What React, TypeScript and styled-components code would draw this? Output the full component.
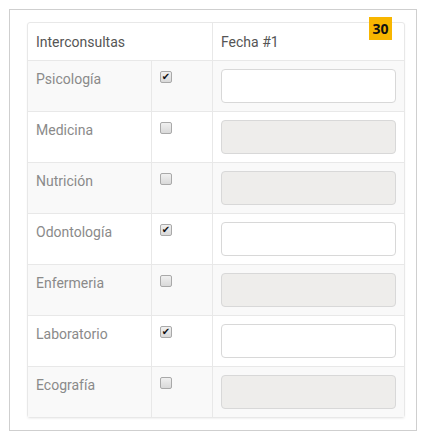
import React from "react";
import styled, { createGlobalStyle } from "styled-components";

const GlobalStyle = createGlobalStyle`
  body {
    margin: 0;
    background: #fff;
    font-family: Roboto, "Liberation Sans", sans-serif;
  }
`;

const Frame = styled.div`
  position: relative;
  box-sizing: border-box;
  margin: 9px;
  width: 408px;
  height: 422px;
  border: 1px solid #cfcfcf;
  padding: 12px 11px 0 17px;
`;

const Badge = styled.div`
  position: absolute;
  top: 7px;
  left: 359px;
  width: 23px;
  height: 23px;
  background: #f8b600;
  color: #111;
  font-family: "Open Sans", "Liberation Sans", sans-serif;
  font-weight: 700;
  font-size: 14px;
  line-height: 23px;
  text-align: center;
`;

const Table = styled.table`
  width: 378px;
  border-collapse: separate;
  border-spacing: 0;
  border: 1px solid #e8e8e8;
  border-radius: 3px;
  box-shadow: 0 1px 2px rgba(0, 0, 0, 0.06);
  font-size: 14px;
`;

const HeadCell = styled.th`
  height: 37px;
  padding: 0 8px;
  text-align: left;
  font-weight: 400;
  color: #555;
  border-left: ${(p: { first?: boolean }) => (p.first ? "none" : "1px solid #e8e8e8")};
  vertical-align: middle;
`;

const Row = styled.tr<{ striped: boolean }>`
  background: ${(p) => (p.striped ? "#f9f9f9" : "#fff")};
`;

const Cell = styled.td<{ first?: boolean }>`
  box-sizing: border-box;
  height: 51px;
  padding: 8px 8px 0;
  vertical-align: top;
  color: #8a8a8a;
  border-top: 1px solid #e8e8e8;
  border-left: ${(p) => (p.first ? "none" : "1px solid #e8e8e8")};
`;

const LabelCell = styled(Cell)`
  width: 123px;
  line-height: 20px;
`;

const CheckCell = styled(Cell)`
  width: 61px;
  padding-top: 10px;
`;

const Check = styled.span<{ checked: boolean }>`
  display: block;
  box-sizing: border-box;
  width: 12px;
  height: 12px;
  border: 1px solid #a9a9a9;
  border-radius: 2px;
  background: linear-gradient(#f0f0f0, #d9d9d9);
  color: #111;
  font-size: 10px;
  line-height: 10px;
  text-align: center;
  font-family: "DejaVu Sans", sans-serif;
`;

const InputCell = styled(Cell)`
  padding: 8px 8px 0;
`;

const DateInput = styled.div<{ disabled: boolean }>`
  box-sizing: border-box;
  width: 175px;
  height: 34px;
  border: 1px solid #d8d8d8;
  border-radius: 4px;
  background: ${(p) => (p.disabled ? "#eeedeb" : "#fff")};
`;

const rows = [
  { name: "Psicología", checked: true },
  { name: "Medicina", checked: false },
  { name: "Nutrición", checked: false },
  { name: "Odontología", checked: true },
  { name: "Enfermeria", checked: false },
  { name: "Laboratorio", checked: true },
  { name: "Ecografía", checked: false },
];

export default function App() {
  return (
    <>
      <GlobalStyle />
      <Frame>
        <Table>
          <thead>
            <tr>
              <HeadCell first colSpan={2}>Interconsultas</HeadCell>
              <HeadCell>Fecha #1</HeadCell>
            </tr>
          </thead>
          <tbody>
            {rows.map((r, i) => (
              <Row key={r.name} striped={i % 2 === 0}>
                <LabelCell first>{r.name}</LabelCell>
                <CheckCell>
                  <Check checked={r.checked}>{r.checked ? "✔" : ""}</Check>
                </CheckCell>
                <InputCell>
                  <DateInput disabled={!r.checked} />
                </InputCell>
              </Row>
            ))}
          </tbody>
        </Table>
        <Badge>30</Badge>
      </Frame>
    </>
  );
}
